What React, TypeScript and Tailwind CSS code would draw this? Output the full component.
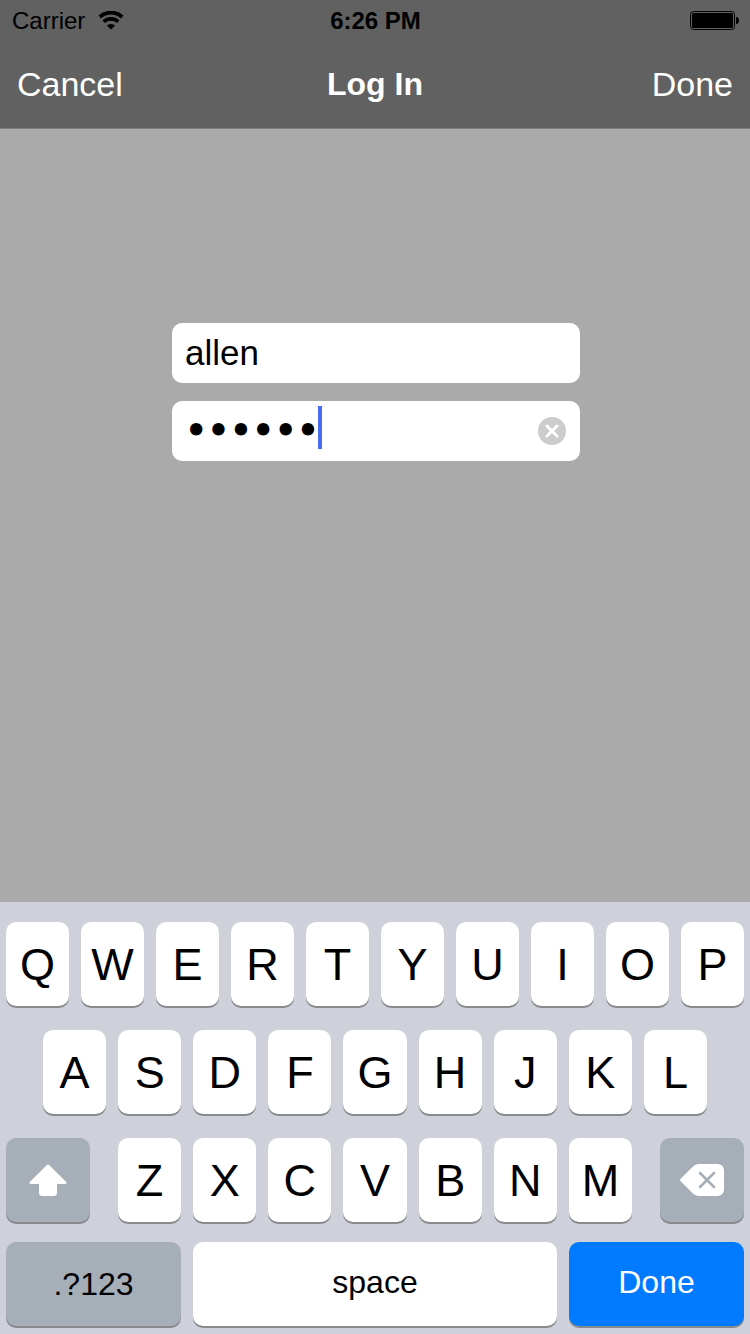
import { useState } from "react";
import type { ReactNode } from "react";

const TOP_ROW = ["Q", "W", "E", "R", "T", "Y", "U", "I", "O", "P"];
const HOME_ROW = ["A", "S", "D", "F", "G", "H", "J", "K", "L"];
const BOTTOM_ROW = ["Z", "X", "C", "V", "B", "N", "M"];

function WifiIcon() {
  return (
    <svg width="26" height="20" viewBox="0 0 26 20" fill="none" aria-hidden="true">
      <path d="M1.800 6 A16.400 16.400 0 0 1 24.200 6" stroke="black" strokeWidth="3.800" />
      <path d="M5.700 10.800 A10.700 10.700 0 0 1 20.300 10.800" stroke="black" strokeWidth="3.600" />
      <path d="M8.800 14.600 A6.300 6.300 0 0 1 17.200 14.600 L13 18.600 Z" fill="black" />
    </svg>
  );
}

function BatteryIcon() {
  return (
    <svg width="49" height="19" viewBox="0 0 49 19" fill="none" aria-hidden="true">
      <rect x="0.5" y="0.5" width="44" height="18" rx="3" stroke="black" />
      <rect x="2" y="2" width="41" height="15" rx="1.5" fill="black" />
      <path d="M46 6 C48 6 49 7.500 49 9.500 C49 11.500 48 13 46 13 Z" fill="black" />
    </svg>
  );
}

function ClearIcon() {
  return (
    <svg width="28" height="28" viewBox="0 0 28 28" fill="none" aria-hidden="true">
      <circle cx="14" cy="14" r="14" fill="#cccccc" />
      <path d="M9 9 L19 19 M19 9 L9 19" stroke="white" strokeWidth="3" strokeLinecap="round" />
    </svg>
  );
}

function ShiftIcon() {
  return (
    <svg width="38" height="32" viewBox="0 0 38 32" aria-hidden="true">
      <path
        d="M18 0.900 Q19 -0.100 20 0.900 L37.300 18.100 Q38.200 19.700 36.500 20 H28 V28.500 Q28 32 24.500 32 H13.500 Q10 32 10 28.500 V20 H1.500 Q-0.200 19.700 0.700 18.100 Z"
        fill="white"
      />
    </svg>
  );
}

function DeleteIcon() {
  return (
    <svg width="44" height="32" viewBox="0 0 44 32" fill="none" aria-hidden="true">
      <path
        d="M0.600 14.800 L12.500 3 Q15.300 0 18.500 0 H37 Q44 0 44 7 V25 Q44 32 37 32 H18.500 Q15.300 32 12.500 29 L0.600 17.200 Q-0.400 16 0.600 14.800 Z"
        fill="white"
      />
      <path d="M20 9 L34 23 M34 9 L20 23" stroke="#a6aeb8" strokeWidth="2.600" strokeLinecap="round" />
    </svg>
  );
}

const KEY = "flex h-[84px] items-center justify-center rounded-[10px] shadow-[0_2px_0_#88898d]";

function LetterKey({ children, onPress }: { children: string; onPress: () => void }) {
  return (
    <button type="button" onClick={onPress} className={`${KEY} min-w-0 flex-1 bg-white text-[45px] leading-none`}>
      {children}
    </button>
  );
}

function GreyKey({ label, className, onPress, children }: { label: string; className: string; onPress?: () => void; children: ReactNode }) {
  return (
    <button type="button" aria-label={label} onClick={onPress} className={`${KEY} ${className} shrink-0 bg-[#a6aeb8] text-[32px]`}>
      {children}
    </button>
  );
}

export default function App() {
  const [user, setUser] = useState("allen");
  const [password, setPassword] = useState("secret");
  const press = (letter: string) => setPassword((value) => value + letter);
  const letters = (row: string[]) =>
    row.map((letter) => (
      <LetterKey key={letter} onPress={() => press(letter)}>
        {letter}
      </LetterKey>
    ));

  return (
    <div className="flex min-h-screen flex-col bg-[#aaaaaa] font-['Liberation_Sans',Arial,sans-serif] text-black">
      <header className="border-b border-[#808080] bg-[#616161]">
        <div className="grid h-10 grid-cols-3 items-center pt-px pr-[11px] pl-3 text-2xl">
          <div className="flex items-center gap-[13px]">
            <span>Carrier</span>
            <WifiIcon />
          </div>
          <time className="text-center font-bold">6:26 PM</time>
          <div className="flex justify-end">
            <BatteryIcon />
          </div>
        </div>
        <nav className="grid h-[88px] grid-cols-3 items-center px-[17px] text-[34px] text-white">
          <button type="button" className="justify-self-start">Cancel</button>
          <h1 className="text-center text-[32px] font-bold">Log In</h1>
          <button type="button" className="justify-self-end">Done</button>
        </nav>
      </header>

      <main className="grow pt-[194px] pl-0.5">
        <form className="mx-auto flex w-[408px] max-w-full flex-col gap-[18px]" onSubmit={(event) => event.preventDefault()}>
          <input
            type="text"
            aria-label="Username"
            value={user}
            onChange={(event) => setUser(event.target.value)}
            className="h-[60px] w-full rounded-[10px] bg-white px-[13px] text-[35px] outline-none"
          />
          <div className="relative flex h-[60px] items-center overflow-hidden rounded-[10px] bg-white pr-3.5 pl-[13px]">
            <input
              type="password"
              aria-label="Password"
              value={password}
              onChange={(event) => setPassword(event.target.value)}
              className="h-[60px] min-w-0 flex-1 bg-transparent font-['DejaVu_Sans',sans-serif] text-[35px] font-bold caret-transparent outline-none"
            />
            <span className="absolute top-[5px] left-[146px] h-[43px] w-1 bg-[#476ef0]" />
            <button type="button" aria-label="Clear password" onClick={() => setPassword("")}>
              <ClearIcon />
            </button>
          </div>
        </form>
      </main>

      <section aria-label="Keyboard" className="bg-[#ced1d9] px-1.5 pt-5 pb-2">
        <div className="flex gap-3">{letters(TOP_ROW)}</div>
        <div className="mt-6 flex gap-3 px-[37px]">{letters(HOME_ROW)}</div>
        <div className="mt-6 flex gap-7">
          <GreyKey label="Shift" className="w-[84px]">
            <ShiftIcon />
          </GreyKey>
          <div className="flex min-w-0 flex-1 gap-3">{letters(BOTTOM_ROW)}</div>
          <GreyKey label="Delete" className="w-[84px]" onPress={() => setPassword((value) => value.slice(0, -1))}>
            <DeleteIcon />
          </GreyKey>
        </div>
        <div className="mt-5 flex gap-3">
          <GreyKey label=".?123" className="w-[175px]">
            .?123
          </GreyKey>
          <button type="button" onClick={() => press(" ")} className={`${KEY} min-w-0 flex-1 bg-white pb-1 text-[32px]`}>
            space
          </button>
          <button type="button" className={`${KEY} w-[175px] shrink-0 bg-[#007aff] pb-1 text-[32px] text-white`}>
            Done
          </button>
        </div>
      </section>
    </div>
  );
}
